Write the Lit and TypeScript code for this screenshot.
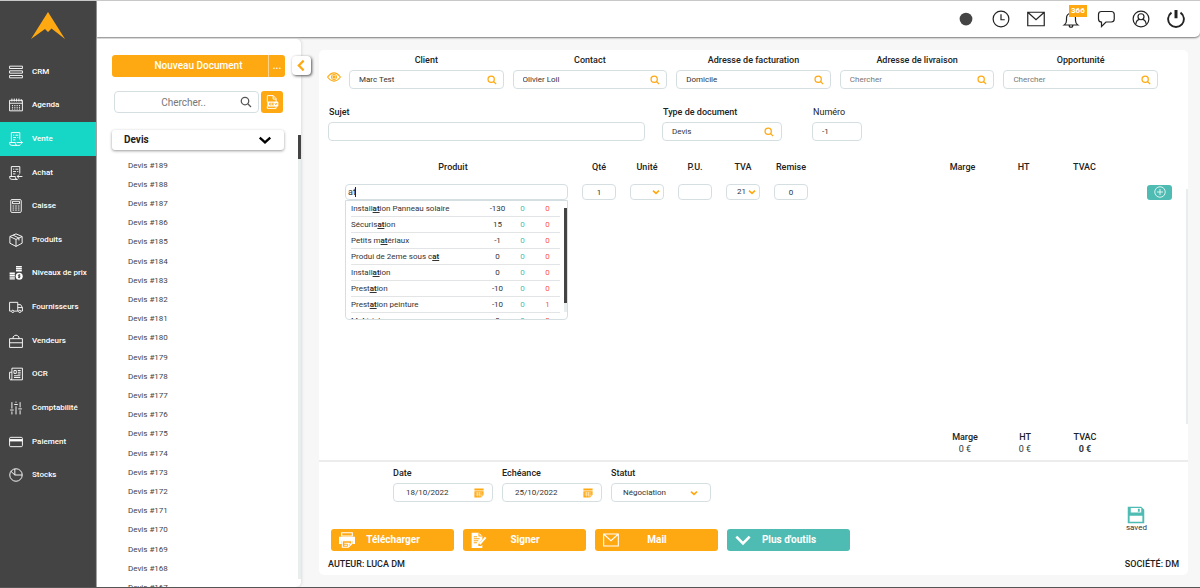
import { LitElement, html, css, svg, nothing } from "lit";
import { customElement, state } from "lit/decorators.js";
import { classMap } from "lit/directives/class-map.js";

const icon = (body: unknown, cls = "", box = "0 0 24 24") =>
  html`<svg class="icon ${cls}" viewBox=${box} aria-hidden="true">${body}</svg>`;

const glyphs = {
  crm: svg`<path d="M1 2h22v4H1zM1 10h22v4H1zM1 18h22v4H1z"/>`,
  agenda: svg`<path d="M1 4h22v18H1zM1 9h22M5 1v5M9 1v5M13 1v5M17 1v5M21 2v4"/><path stroke-dasharray="2 2" d="M5 13h15M5 16h15M5 19h15"/>`,
  vente: svg`<path d="M18.500 13V1H4v17M1 18h10v2q0 3 3 3h4.500v-1M1 18v1q0 4 4 4h9M7 5.500h2M11 5.500h5M7 9.500h5M14 9.500h2M7 13.500h4M13 18h10M19.500 14.500L23 18l-3.500 3.500"/>`,
  achat: svg`<path d="M18.500 13V1H4v17M1 18h10v2q0 3 3 3h1M1 18v1q0 4 4 4h9M7 5.500h2M11 5.500h5M7 9.500h5M14 9.500h2M7 13.500h4M14 18h9M17.500 14.500L14 18l3.500 3.500"/>`,
  caisse: svg`<rect x="3" y="1" width="18" height="22" rx="2"/><path d="M6 4h12v4H6z"/><path stroke-dasharray="3 1.500" d="M6 12h12M6 15.500h12M6 19h12"/>`,
  produits: svg`<path d="M12 1.500l10.500 4.500v11.500L12 23 1.500 17.500V6zM1.500 6L12 11l10.500-5M12 11v12M7 3.700l10 5v4"/>`,
  prix: svg`<path d="M12 0h10v2.500H12zM12 3.500h10V6H12zM12 7h10v2.500H12zM1 11h9v2.500H1zM1 14.500h9V17H1zM1 18h9v2H1zM1 21h9v2H1z" fill="currentColor" stroke="none"/><circle cx="17.500" cy="17.500" r="6" fill="currentColor" stroke="none"/><path stroke="#444" d="M19.500 15.500h-3q-1 1 0 2h2q1 1 0 2h-3M17.500 14v7"/>`,
  camion: svg`<path d="M4 19H1V4h14v15H9M15 8h5l3 5v6h-2M16 19h-1M15 13h8"/><circle cx="6.500" cy="19.500" r="2"/><circle cx="18.500" cy="19.500" r="2"/>`,
  vendeurs: svg`<path d="M1 8h22v15H1zM7 8V5Q12 -1 17 5v3M1 15h22"/>`,
  ocr: svg`<path d="M5 2h18v20H3q-2 0-2-3V9h4M5 2v17q0 3-2 3M8.500 6h4v5h-4zM15 6h5M15 9h5M15 12h5M8.500 15h11M8.500 18h11"/>`,
  compta: svg`<path d="M5 2v11M5 18v5M2 15.500h6M12 1v2M12 9v14M9 6h6M19 2v9M19 16v7M16 13.500h6"/>`,
  carte: svg`<rect x="1" y="4" width="22" height="16" rx="2"/><path stroke-width="4" d="M1 9h22"/>`,
  stocks: svg`<circle cx="12" cy="12" r="10.700"/><path d="M10 1.500V12h12.500M10 12L3 5.500"/>`,
};

const NAV: Array<[string, unknown]> = [
  ["CRM", glyphs.crm],
  ["Agenda", glyphs.agenda],
  ["Vente", glyphs.vente],
  ["Achat", glyphs.achat],
  ["Caisse", glyphs.caisse],
  ["Produits", glyphs.produits],
  ["Niveaux de prix", glyphs.prix],
  ["Fournisseurs", glyphs.camion],
  ["Vendeurs", glyphs.vendeurs],
  ["OCR", glyphs.ocr],
  ["Comptabilité", glyphs.compta],
  ["Paiement", glyphs.carte],
  ["Stocks", glyphs.stocks],
];

const TOOLS: Array<[string, unknown]> = [
  ["Statut", svg`<circle cx="12" cy="12" r="8.500" fill="#444" stroke="none"/>`],
  ["Historique", svg`<circle cx="12" cy="12" r="10.500"/><path d="M12 5.500V13h5"/>`],
  ["Messages", svg`<path d="M1 3h22v18H1zM1 3l11 10L23 3"/>`],
  ["Notifications", svg`<path d="M3 20q3-2 3-6v-3q0-6 6-7 6 1 6 7v3q0 4 3 6zM9.500 20q0 3 2.500 3t2.500-3M12 4V2"/>`],
  ["Discussion", svg`<path d="M6 2h13q4 0 4 4v6q0 4-4 4h-7l-6 6v-6q-4 0-4-4V6q0-4 4-4z"/>`],
  ["Profil", svg`<circle cx="12" cy="12" r="10.500"/><circle cx="12" cy="9" r="4"/><path d="M5 19q1-6 5-6.500M19 19q-1-6-5-6.500"/>`],
  ["Déconnexion", svg`<path stroke-width="2.500" d="M6 3.500a10.500 10.500 0 1 0 12 0"/><path stroke-width="4" d="M12 0v11"/>`],
];

const PARTIES = [
  { id: "client", label: "Client", value: "Marc Test" },
  { id: "contact", label: "Contact", value: "Olivier Loil" },
  { id: "facturation", label: "Adresse de facturation", value: "Domicile" },
  { id: "livraison", label: "Adresse de livraison", value: "" },
  { id: "opportunite", label: "Opportunité", value: "" },
];

const PRODUCTS: Array<[string, number, number, number]> = [
  ["Installation Panneau solaire", -130, 0, 0],
  ["Sécurisation", 15, 0, 0],
  ["Petits matériaux", -1, 0, 0],
  ["Produi de 2eme sous cat", 0, 0, 0],
  ["Installation", 0, 0, 0],
  ["Prestation", -10, 0, 0],
  ["Prestation peinture", -10, 0, 1],
  ["Matériel", 0, 0, 0],
];

const loupe = icon(svg`<circle cx="10" cy="10" r="7.500"/><path d="M15.500 15.500L22 22"/>`, "loupe");
const chevron = icon(svg`<path d="M3 8l9 8 9-8"/>`, "chevron");
const calendar = icon(
  svg`<path d="M1 1h22v5H1zM1 8h22v9l-6 6H1z" fill="currentColor" stroke="none"/><path stroke="#fff" stroke-width="1.200" d="M4 12h16M4 16.500h13M8 9.500v11M13 9.500v11M17 23v-6h6"/>`,
  "calendar",
);

@customElement("app-root")
export class AppRoot extends LitElement {
  @state() private query = "at";
  @state() private section = "Vente";

  static styles = css`
    :host {
      display: block;
      font-family: Roboto, "Liberation Sans", sans-serif;
      font-size: 9px;
      line-height: 12px;
      color: #333;
    }
    * {
      box-sizing: border-box;
    }
    button, input, select {
      font: inherit;
      color: inherit;
      margin: 0;
      padding: 0;
      border: 0;
      outline: 0;
      background: none;
      appearance: none;
      min-width: 0;
    }
    button {
      cursor: pointer;
    }
    .icon {
      display: block;
      flex: none;
      width: 14px;
      height: 14px;
      fill: none;
      stroke: currentColor;
      stroke-width: 1.6;
    }
    .app {
      display: grid;
      grid-template-columns: 97px minmax(0, 1fr);
      height: 100vh;
      overflow: hidden;
      background: #f7f7f7;
      border-top: 1px solid #c8c8c8;
      border-bottom: 1px solid #555;
    }

    /* side navigation */
    .side {
      display: flex;
      flex-direction: column;
      background: #444;
      color: #fff;
      border-right: 1px solid #999;
      padding-bottom: 95px;
    }
    .logo {
      width: 34px;
      height: 27px;
      margin: 11px auto 15px;
    }
    .nav {
      flex: 1;
      display: grid;
      grid-auto-rows: 1fr;
      padding-top: 1px;
    }
    .nav-link {
      display: flex;
      align-items: center;
      gap: 9px;
      padding-left: 9px;
      color: #fff;
      text-decoration: none;
      font-size: 8px;
      font-weight: 500;
      white-space: nowrap;
    }
    .nav-link.active {
      background: #16d6c6;
    }

    /* top bar */
    .body {
      display: flex;
      flex-direction: column;
      min-width: 0;
      min-height: 0;
    }
    .top {
      flex: none;
      display: flex;
      align-items: center;
      justify-content: flex-end;
      gap: 17px;
      height: 36px;
      padding-right: 15px;
      background: #fff;
      border-bottom-right-radius: 5px;
      box-shadow: 0 1px 2px #777;
      color: #222;
    }
    .tool {
      position: relative;
      width: 18px;
      height: 18px;
    }
    .tool .icon {
      width: 18px;
      height: 18px;
    }
    .count {
      position: absolute;
      left: 7px;
      top: -5px;
      padding: 0 2px;
      background: #ffa912;
      color: #fff;
      font-size: 8px;
      font-weight: 700;
      line-height: 12px;
    }
    .work {
      flex: 1;
      display: grid;
      grid-template-columns: 204px minmax(0, 1fr);
      gap: 18px;
      min-height: 0;
      padding-right: 12px;
    }

    /* documents list */
    .docs {
      position: relative;
      display: flex;
      flex-direction: column;
      margin-top: 2px;
      padding-top: 16px;
      min-height: 0;
      background: #fff;
      border-radius: 0 5px 5px 0;
      box-shadow: 1px 0 3px #ddd;
    }
    .toggle {
      position: absolute;
      right: -10px;
      top: 17px;
      display: grid;
      place-items: center;
      width: 19px;
      height: 19px;
      background: #fff;
      border-radius: 4px;
      box-shadow: 1px 1px 3px #555;
      color: #ffa912;
    }
    .toggle .icon {
      width: 13px;
      height: 13px;
      stroke-width: 4;
    }
    .new {
      display: grid;
      grid-template-columns: 1fr 17px;
      margin: 0 16px 0 15px;
      border-radius: 3px;
      background: #ffa912;
      color: #fff;
      font-size: 10px;
      font-weight: 500;
      overflow: hidden;
    }
    .new button {
      height: 22px;
      padding-left: 17px;
    }
    .new .more {
      padding-left: 0;
      border-left: 1px solid #ffd48a;
    }
    .search {
      display: flex;
      gap: 2px;
      margin: 14px 18px 0 17px;
    }
    .field {
      display: flex;
      align-items: center;
      min-width: 0;
      height: 19px;
      padding: 0 7px 0 9px;
      background: #fff;
      border: 1px solid #d5dfe2;
      border-radius: 4px;
      font-size: 8px;
    }
    .field input, .field select {
      flex: 1;
      width: 100%;
      height: 100%;
    }
    .field input::placeholder {
      color: #777;
      opacity: 1;
    }
    .search .field {
      flex: 1;
      height: 22px;
      padding: 0 6px 0 12px;
      font-size: 10px;
    }
    .search .field input {
      text-align: center;
    }
    .pdf {
      display: grid;
      place-items: center;
      width: 22px;
      height: 22px;
      border-radius: 3px;
      background: #ffa912;
      color: #fff;
    }
    .kind {
      display: flex;
      align-items: center;
      height: 20px;
      margin: 17px 17px 0 15px;
      padding: 0 12px;
      border-radius: 3px;
      box-shadow: 0 1px 3px #999;
      color: #222;
      font-size: 10px;
      font-weight: 700;
    }
    .kind select {
      flex: 1;
      height: 100%;
    }
    .kind .chevron {
      width: 14px;
      height: 14px;
      stroke: #000;
      stroke-width: 4;
    }
    .list-wrap {
      flex: 1;
      display: flex;
      min-height: 0;
    }
    .list {
      flex: 1;
      margin: 6px 0 0;
      padding: 0 0 0 31px;
      list-style: none;
      overflow: hidden;
      font-size: 8px;
      line-height: 19px;
    }
    .list li:nth-child(5n) {
      padding-bottom: 1px;
    }
    .list a {
      color: #444;
      text-decoration: none;
    }
    .bar {
      width: 3px;
      margin-bottom: 8px;
      background: #e8eeee;
    }
    .bar i {
      display: block;
      height: 24px;
      background: #444;
    }
    .docs .bar {
      margin-top: -15px;
    }

    /* document card */
    .card {
      display: flex;
      flex-direction: column;
      min-width: 0;
      margin: 13px 0 12px;
      background: #fff;
      border-radius: 5px;
    }
    .label {
      display: block;
      font-size: 9px;
      font-weight: 500;
      color: #222;
    }
    .light {
      font-weight: 400;
    }
    .orange, .field .loupe, .field .chevron, .field .calendar {
      color: #ffa912;
    }
    .field .loupe, .field .calendar {
      width: 10px;
      height: 10px;
      stroke-width: 3;
    }
    .search .field .loupe {
      width: 12px;
      height: 12px;
      color: #555;
      stroke-width: 2.5;
    }
    .field .chevron {
      width: 8px;
      height: 8px;
      stroke-width: 5;
    }
    .parties {
      display: grid;
      grid-template-columns: 13px repeat(5, minmax(0, 1fr));
      column-gap: 9px;
      padding: 4px 30px 0 8px;
    }
    .parties .label {
      text-align: center;
      margin-bottom: 4px;
    }
    .parties .field {
      padding-right: 6px;
    }
    .eye {
      align-self: end;
      padding-bottom: 5px;
    }
    .meta {
      display: grid;
      grid-template-columns: 317fr 17fr 120fr 30fr 50fr 318fr;
      align-items: end;
      padding: 17px 8px 0 9px;
    }
    .meta .label {
      margin: 0 0 4px 1px;
      white-space: nowrap;
    }
    .meta .type {
      grid-column: 3;
    }
    .meta .num {
      grid-column: 5;
    }

    .lines {
      flex: 1;
      display: flex;
      min-height: 0;
      padding-top: 19px;
    }
    .lines-table {
      flex: 1;
      width: 100%;
      align-self: flex-start;
      table-layout: fixed;
      border-collapse: collapse;
    }
    .lines-table th {
      height: 13px;
      padding: 0;
      font-size: 9px;
      font-weight: 500;
      color: #222;
    }
    .lines-table td {
      padding: 11px 7px 0;
    }
    .lines-table td.product {
      position: relative;
      padding-left: 14px;
      padding-right: 7px;
    }
    .c-pad { width: 12px; }
    .c-product { width: 244px; }
    .c-small { width: 48px; }
    .c-sum { width: 61px; }
    .c-add { width: 71px; }
    .lines-table .field {
      height: 16px;
      padding: 0 3px;
    }
    .lines-table .product .field {
      padding: 0 2px;
      font-size: 9px;
    }
    .caret {
      position: absolute;
      left: 24px;
      top: 14px;
      width: 1px;
      height: 10px;
      background: #222;
    }
    .lines-table .center input {
      text-align: center;
    }
    .lines-table select {
      padding-left: 7px;
    }
    .add {
      display: grid;
      place-items: center;
      width: 25px;
      height: 15px;
      margin-left: 25px;
      border-radius: 3px;
      background: #4ebcb2;
      color: #fff;
    }
    .add .icon {
      width: 12px;
      height: 12px;
    }
    .suggest {
      position: absolute;
      z-index: 2;
      left: 14px;
      right: 7px;
      top: 100%;
      display: flex;
      height: 120px;
      padding-left: 5px;
      overflow: hidden;
      background: #fff;
      border: 1px solid #d5dfe2;
      border-radius: 0 0 4px 4px;
    }
    .options {
      flex: 1;
      margin: 0 4px 0 0;
      padding: 0;
      list-style: none;
    }
    .options li {
      display: grid;
      grid-template-columns: 1fr 25px 25px 25px;
      height: 16px;
      line-height: 15px;
      border-bottom: 1px solid #e2e4e6;
      font-size: 8px;
      text-align: center;
    }
    .options span:first-child {
      text-align: left;
    }
    .options b {
      font-weight: 700;
      text-decoration: underline;
    }
    .ok { color: #4ebcb2; }
    .ko { color: #f4564a; }
    .suggest .bar {
      margin: 7px 0;
    }
    .suggest .bar i {
      height: 95px;
    }
    .lines > .bar {
      width: 2px;
      margin: 29px 0 0;
    }
    .totals {
      display: grid;
      grid-template-columns: repeat(3, 60px);
      justify-content: end;
      margin: 0;
      padding: 8px 73px 5px 0;
      border-bottom: 2px solid #ececec;
      text-align: center;
    }
    .totals dt {
      font-weight: 500;
      color: #222;
      line-height: 11px;
    }
    .totals dd {
      margin: 0;
      line-height: 12px;
    }
    .totals .strong {
      font-weight: 700;
    }

    /* card footer */
    .foot {
      display: grid;
      grid-template-columns: minmax(0, 1fr) auto;
      align-items: end;
      padding: 5px 9px 4px;
    }
    .dates {
      display: grid;
      grid-template-columns: repeat(3, 100px);
      gap: 9px;
      padding-left: 65px;
    }
    .dates .label {
      margin-bottom: 4px;
    }
    .dates .field {
      padding: 0 8px 0 12px;
    }
    .dates .status {
      padding: 0 12px 0 11px;
    }
    .actions {
      display: grid;
      grid-template-columns: repeat(4, 123px);
      gap: 9px;
      margin-top: 27px;
      padding-left: 3px;
    }
    .action {
      display: grid;
      grid-template-columns: 16px 1fr 15px;
      align-items: center;
      height: 22px;
      padding: 0 8px;
      border-radius: 3px;
      background: #ffa912;
      color: #fff;
      font-size: 10px;
      font-weight: 700;
    }
    .action .icon {
      width: 16px;
      height: 16px;
    }
    .action.teal {
      background: #4ebcb2;
    }
    .action.teal .icon {
      stroke-width: 4;
    }
    .saved {
      display: grid;
      justify-items: center;
      margin: 0 31px 19px 0;
      font-size: 8px;
      line-height: 8px;
      color: #333;
    }
    .saved .icon {
      width: 18px;
      height: 18px;
    }
    .owner {
      font-size: 9px;
      font-weight: 500;
      line-height: 14px;
      color: #222;
      margin-top: 6px;
    }
    .owner.right {
      text-align: right;
    }
  `;

  private highlight(name: string) {
    const at = this.query ? name.toLowerCase().indexOf(this.query.toLowerCase()) : -1;
    if (at < 0) return name;
    const end = at + this.query.length;
    return html`${name.slice(0, at)}<b>${name.slice(at, end)}</b>${name.slice(end)}`;
  }

  private renderSide() {
    return html`<aside class="side">
      <svg class="logo" viewBox="0 0 34 27" aria-hidden="true">
        <path fill="#ffa912" d="M17 0l17 27-13.500-10.500-3.500 3.500-3-3L0 27z" />
      </svg>
      <nav class="nav">
        ${NAV.map(
          ([name, glyph]) => html`<a
            class=${classMap({ "nav-link": true, active: name === this.section })}
            href="#"
            @click=${(e: Event) => {
              e.preventDefault();
              this.section = name;
            }}
            >${icon(glyph)}<span>${name}</span></a
          >`,
        )}
      </nav>
    </aside>`;
  }

  private renderDocs() {
    const numbers = Array.from({ length: 23 }, (_, i) => 189 - i);
    return html`<section class="docs">
      <button class="toggle" aria-label="Réduire">${icon(svg`<path d="M16 3l-9 9 9 9"/>`)}</button>
      <div class="new"><button>Nouveau Document</button><button class="more">...</button></div>
      <div class="search">
        <div class="field"><input aria-label="Chercher un document" placeholder="Chercher.." />${loupe}</div>
        <button class="pdf" aria-label="Exporter">
          ${icon(svg`<path d="M4 12V1h10l5 5v6M14 1v6h5M4 19v4h15v-4"/><path d="M5 12h17v7H5z" fill="currentColor"/><path stroke="#ffa912" d="M11 14H8v3h3M15 14h-2.500v3H15M17 14l1.500 3 1.500-3"/>`)}
        </button>
      </div>
      <div class="kind">
        <select aria-label="Catégorie"><option>Devis</option><option>Facture</option></select>${chevron}
      </div>
      <div class="list-wrap">
        <ul class="list">
          ${numbers.map((n) => html`<li><a href="#">Devis #${n}</a></li>`)}
        </ul>
        <div class="bar"><i></i></div>
      </div>
    </section>`;
  }

  private renderLines() {
    return html`<div class="lines">
      <table class="lines-table">
        <colgroup>
          <col class="c-pad" /><col class="c-product" />
          <col class="c-small" /><col class="c-small" /><col class="c-small" /><col class="c-small" /><col class="c-small" />
          <col />
          <col class="c-sum" /><col class="c-sum" /><col class="c-sum" /><col class="c-add" />
        </colgroup>
        <thead>
          <tr>
            <th></th><th>Produit</th><th>Qté</th><th>Unité</th><th>P.U.</th><th>TVA</th><th>Remise</th>
            <th></th><th>Marge</th><th>HT</th><th>TVAC</th><th></th>
          </tr>
        </thead>
        <tbody>
          <tr>
            <td></td>
            <td class="product">
              <div class="field">
                <input
                  id="produit"
                  aria-label="Produit"
                  .value=${this.query}
                  @input=${(e: Event) => (this.query = (e.target as HTMLInputElement).value)}
                />
              </div>
              ${this.query === "at" ? html`<span class="caret"></span>` : nothing}
              ${this.query
                ? html`<div class="suggest">
                    <ul class="options">
                      ${PRODUCTS.map(
                        ([name, stock, ok, ko]) => html`<li>
                          <span>${this.highlight(name)}</span><span>${stock}</span>
                          <span class="ok">${ok}</span><span class="ko">${ko}</span>
                        </li>`,
                      )}
                    </ul>
                    <div class="bar"><i></i></div>
                  </div>`
                : nothing}
            </td>
            <td><div class="field center"><input aria-label="Qté" value="1" /></div></td>
            <td><div class="field"><select aria-label="Unité"><option></option></select>${chevron}</div></td>
            <td><div class="field center"><input aria-label="P.U." /></div></td>
            <td><div class="field"><select aria-label="TVA"><option>21</option><option>6</option></select>${chevron}</div></td>
            <td><div class="field center"><input aria-label="Remise" value="0" /></div></td>
            <td></td><td></td><td></td><td></td>
            <td>
              <button class="add" aria-label="Ajouter">
                ${icon(svg`<circle cx="12" cy="12" r="10.500"/><path d="M12 6v12M6 12h12"/>`)}
              </button>
            </td>
          </tr>
        </tbody>
      </table>
      <div class="bar"></div>
    </div>`;
  }

  private renderFoot() {
    return html`<footer class="foot">
      <div>
        <div class="dates">
          <div>
            <label class="label" for="date">Date</label>
            <div class="field"><input id="date" value="18/10/2022" />${calendar}</div>
          </div>
          <div>
            <label class="label" for="echeance">Echéance</label>
            <div class="field"><input id="echeance" value="25/10/2022" />${calendar}</div>
          </div>
          <div>
            <label class="label" for="statut">Statut</label>
            <div class="field status"><select id="statut"><option>Négociation</option></select>${chevron}</div>
          </div>
        </div>
        <div class="actions">
          <button class="action">
            ${icon(svg`<path d="M4 1h16v5H4z"/><path d="M0 7h24v11h-4v-5H4v5H0z" fill="currentColor" stroke="none"/><path d="M5 13h14v5l-5 5H5zM8 17h8M8 20h4M14 23v-5h5"/>`)}
            <span>Télécharger</span>
          </button>
          <button class="action">
            ${icon(svg`<path d="M1 1h11l5 5v5l-6 7v3h4l2-2v5H1z" fill="currentColor" stroke="none"/><path stroke="#ffa912" d="M4 7h5M4 10h9M4 13h7M4 16h5M12 1v5h5"/><path stroke-width="3" d="M13 18L22 8"/>`)}
            <span>Signer</span>
          </button>
          <button class="action">
            ${icon(svg`<path d="M1 3h22v18H1zM1 3l11 10L23 3"/>`)}
            <span>Mail</span>
          </button>
          <button class="action teal">
            ${icon(svg`<path d="M2 7l10 10L22 7"/>`)}
            <span>Plus d'outils</span>
          </button>
        </div>
      </div>
      <button class="saved">
        ${icon(svg`<path fill="#4ebcb2" stroke="none" fill-rule="evenodd" d="M1 1h18l4 4v18H1zM5 2.500v6h14v-6zM3.500 13v8h17v-8zM14.500 3.500h2.500v4h-2.500z"/>`)}
        <span>saved</span>
      </button>
      <div class="owner">AUTEUR: LUCA DM</div>
      <div class="owner right">SOCIÉTÉ: DM</div>
    </footer>`;
  }

  render() {
    return html`<div class="app">
      ${this.renderSide()}
      <div class="body">
        <header class="top">
          ${TOOLS.map(
            ([name, glyph]) => html`<button class="tool" aria-label=${name}>
              ${icon(glyph)}${name === "Notifications" ? html`<span class="count">366</span>` : nothing}
            </button>`,
          )}
        </header>
        <div class="work">
          ${this.renderDocs()}
          <main class="card">
            <div class="parties">
              <button class="eye orange" aria-label="Aperçu">
                ${icon(svg`<path stroke-width="2" d="M1 12q11-14 22 0-11 14-22 0z"/><circle cx="12" cy="12" r="4.500"/><circle cx="12" cy="12" r="2" fill="currentColor"/>`)}
              </button>
              ${PARTIES.map(
                (p) => html`<div>
                  <label class="label" for=${p.id}>${p.label}</label>
                  <div class="field"><input id=${p.id} .value=${p.value} placeholder="Chercher" />${loupe}</div>
                </div>`,
              )}
            </div>
            <div class="meta">
              <div>
                <label class="label" for="sujet">Sujet</label>
                <div class="field"><input id="sujet" /></div>
              </div>
              <div class="type">
                <label class="label" for="type">Type de document</label>
                <div class="field"><input id="type" value="Devis" />${loupe}</div>
              </div>
              <div class="num">
                <label class="label light" for="numero">Numéro</label>
                <div class="field"><input id="numero" value="-1" /></div>
              </div>
            </div>
            ${this.renderLines()}
            <dl class="totals">
              <dt>Marge</dt><dt>HT</dt><dt>TVAC</dt>
              <dd>0 €</dd><dd>0 €</dd><dd class="strong">0 €</dd>
            </dl>
            ${this.renderFoot()}
          </main>
        </div>
      </div>
    </div>`;
  }
}
